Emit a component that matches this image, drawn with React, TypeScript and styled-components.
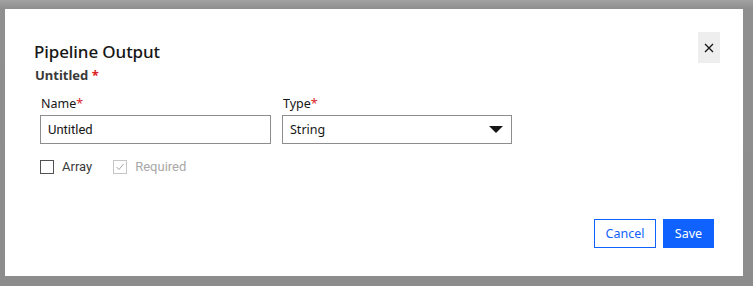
import React from "react";
import styled, { createGlobalStyle } from "styled-components";

const Global = createGlobalStyle`
  html, body { margin: 0; padding: 0; }
  body {
    background: linear-gradient(#a3a3a3 0px, #8f8f8f 8px, #8c8c8c 100%);
    width: 753px;
    height: 286px;
    overflow: hidden;
    font-family: "Roboto", "Liberation Sans", sans-serif;
  }
`;

const Modal = styled.div`
  box-sizing: border-box;
  margin: 9px 0 0 5px;
  width: 738px;
  height: 267px;
  background: #ffffff;
  padding: 23px 23px 0 29px;
  display: flex;
  flex-direction: column;
`;

const Header = styled.div`
  display: flex;
  justify-content: space-between;
  align-items: flex-start;
`;

const Heading = styled.div`
  display: flex;
  flex-direction: column;
  padding-top: 8px;
`;

const Title = styled.h2`
  margin: 0;
  font-family: "Noto Sans", "Liberation Sans", sans-serif;
  font-weight: 500;
  font-size: 17px;
  line-height: 24px;
  color: #161616;
  letter-spacing: -0.1px;
`;

const Subtitle = styled.div`
  margin-top: 2px;
  padding-left: 1px;
  font-family: "Noto Sans", "Liberation Sans", sans-serif;
  font-weight: 700;
  font-size: 13px;
  line-height: 18px;
  color: #393939;
`;

const Req = styled.span`
  color: #da1e28;
`;

const CloseButton = styled.button`
  width: 22px;
  height: 31px;
  padding: 0;
  border: none;
  background: #eeeeee;
  display: flex;
  align-items: center;
  justify-content: center;
  cursor: pointer;
`;

const Fields = styled.div`
  display: flex;
  gap: 11px;
  padding-left: 6px;
  margin-top: 12px;
`;

const Field = styled.div<{ $w: number }>`
  display: flex;
  flex-direction: column;
  width: ${(p) => p.$w}px;
`;

const Label = styled.label`
  font-family: "Noto Sans", "Liberation Sans", sans-serif;
  font-size: 12.5px;
  line-height: 16px;
  color: #161616;
  padding-left: 1px;
  margin-bottom: 3px;
`;

const Input = styled.div`
  box-sizing: border-box;
  height: 29px;
  border: 1px solid #8d8d8d;
  display: flex;
  align-items: center;
  justify-content: space-between;
  padding: 0 7px;
  font-size: 13px;
  color: #161616;
`;

const SelectText = styled.span`
  font-family: "Noto Sans", "Liberation Sans", sans-serif;
  font-size: 12.5px;
`;

const Checks = styled.div`
  display: flex;
  align-items: center;
  gap: 21px;
  padding-left: 6px;
  margin-top: 15px;
`;

const Check = styled.label<{ $disabled?: boolean }>`
  display: flex;
  align-items: center;
  gap: 8px;
  font-size: 13px;
  color: ${(p) => (p.$disabled ? "#a8a8a8" : "#393939")};
`;

const Box = styled.span<{ $disabled?: boolean }>`
  box-sizing: border-box;
  width: 14px;
  height: 14px;
  border: 1px solid ${(p) => (p.$disabled ? "#c6c6c6" : "#525252")};
  display: flex;
  align-items: center;
  justify-content: center;
`;

const Footer = styled.div`
  margin-top: auto;
  margin-bottom: 28px;
  display: flex;
  justify-content: flex-end;
  gap: 7px;
  padding-right: 6px;
`;

const Button = styled.button<{ $primary?: boolean; $w: number }>`
  box-sizing: border-box;
  width: ${(p) => p.$w}px;
  height: 29px;
  padding: 0;
  font-family: "Noto Sans", "Liberation Sans", sans-serif;
  font-size: 12.5px;
  border: 1px solid #0f62fe;
  background: ${(p) => (p.$primary ? "#0f62fe" : "#ffffff")};
  color: ${(p) => (p.$primary ? "#ffffff" : "#0f62fe")};
  cursor: pointer;
`;

export default function App() {
  return (
    <>
      <Global />
      <Modal>
        <Header>
          <Heading>
            <Title>Pipeline Output</Title>
            <Subtitle>
              Untitled <Req>*</Req>
            </Subtitle>
          </Heading>
          <CloseButton aria-label="Close">
            <svg width="10" height="10" viewBox="0 0 10 10">
              <path d="M1 1 L9 9 M9 1 L1 9" stroke="#161616" strokeWidth="1.3" fill="none" />
            </svg>
          </CloseButton>
        </Header>
        <Fields>
          <Field $w={231}>
            <Label>
              Name<Req>*</Req>
            </Label>
            <Input>Untitled</Input>
          </Field>
          <Field $w={230}>
            <Label>
              Type<Req>*</Req>
            </Label>
            <Input>
              <SelectText>String</SelectText>
              <svg width="14" height="8" viewBox="0 0 14 8" style={{ marginRight: 1 }}>
                <path d="M0 0 H14 L7 7 Z" fill="#161616" />
              </svg>
            </Input>
          </Field>
        </Fields>
        <Checks>
          <Check>
            <Box />
            Array
          </Check>
          <Check $disabled>
            <Box $disabled>
              <svg width="10" height="10" viewBox="0 0 10 10">
                <path d="M1.5 5 L4 7.5 L8.5 2" stroke="#a8a8a8" strokeWidth="1" fill="none" />
              </svg>
            </Box>
            Required
          </Check>
        </Checks>
        <Footer>
          <Button $w={62}>Cancel</Button>
          <Button $primary $w={51}>Save</Button>
        </Footer>
      </Modal>
    </>
  );
}
